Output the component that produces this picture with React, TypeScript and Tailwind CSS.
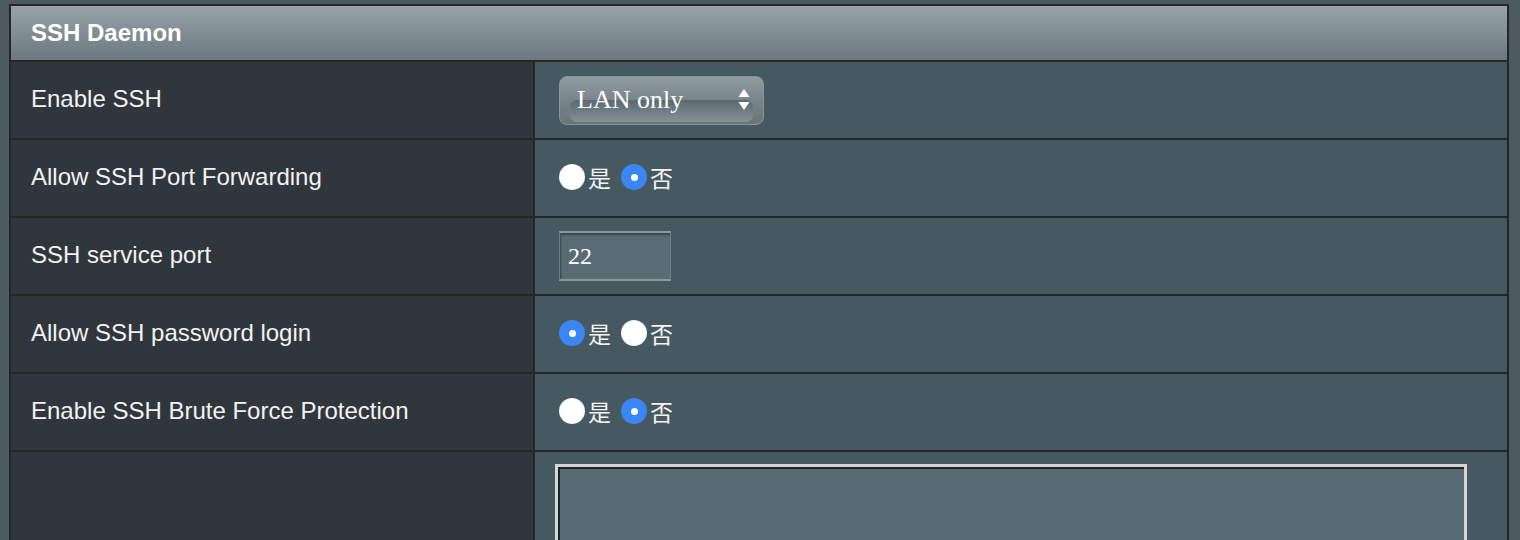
import React from 'react';

const Radio = ({ checked }: { checked: boolean }) =>
  checked ? (
    <span className="flex h-[26px] w-[26px] items-center justify-center rounded-full bg-[#3a86f5]">
      <span className="h-[7px] w-[7px] rounded-full bg-white" />
    </span>
  ) : (
    <span className="h-[26px] w-[26px] rounded-full bg-[radial-gradient(circle,#ffffff_62%,#d0d4d6_85%,#8d979b_100%)]" />
  );

const YesNo = ({ yes }: { yes: boolean }) => (
  <div className="-mt-[2px] flex items-center text-[23px] text-[#f4f4f4] [font-family:'Noto_Sans_CJK_SC',sans-serif]">
    <Radio checked={yes} />
    <span className="ml-[3px] mr-[10px] leading-none">是</span>
    <Radio checked={!yes} />
    <span className="ml-[3px] leading-none">否</span>
  </div>
);

const Row = ({ label, children, last }: { label: string; children?: React.ReactNode; last?: boolean }) => (
  <div className={`flex ${last ? 'h-[160px]' : 'h-[78px] border-b-2 border-[#242628]'}`}>
    <div className={`w-[524px] shrink-0 border-r-2 border-[#242628] bg-[#2f373d] pl-[20px] ${last ? '' : 'flex items-center'}`}>
      <span className="-mt-[2px] text-[24px] text-[#f2f2f2]">{label}</span>
    </div>
    <div className={`flex-1 bg-[#475960] ${last ? 'pl-[20px] pt-[12px]' : 'flex items-center pl-[24px]'}`}>{children}</div>
  </div>
);

export default function App() {
  return (
    <div className="h-[540px] overflow-hidden bg-[#4d5b61] pl-[9px] pt-[4px] [font-family:'Liberation_Sans',Arial,sans-serif]">
      <div className="w-[1500px] border-2 border-[#242628]">
        <div className="flex h-[56px] items-center border-b-2 border-[#242628] bg-gradient-to-b from-[#97a3a8] to-[#6b7a80] pl-[20px]">
          <span className="text-[24px] font-bold text-white">SSH Daemon</span>
        </div>

        <Row label="Enable SSH">
          <div className="relative h-[49px] w-[205px] overflow-hidden rounded-[8px] border border-[#8a9498] bg-gradient-to-b from-[#8f9ca0] via-[#77868b] to-[#687579]">
            <div className="absolute bottom-[2px] left-[10px] right-[10px] top-[23px] rounded-[7px] bg-gradient-to-b from-[#5a6a70] to-[#839296]" />
            <div className="relative flex h-full items-center justify-between pl-[17px] pr-[13px]">
              <span className="text-[26px] leading-none text-white [font-family:'Liberation_Serif',serif]">LAN only</span>
              <svg width="12" height="24" viewBox="0 0 12 24">
                <path d="M6 1 L11.5 9 L0.5 9 Z" fill="#fff" />
                <path d="M0.5 14 L11.5 14 L6 22 Z" fill="#fff" />
              </svg>
            </div>
          </div>
        </Row>

        <Row label="Allow SSH Port Forwarding">
          <YesNo yes={false} />
        </Row>

        <Row label="SSH service port">
          <div className="flex h-[50px] w-[112px] items-center border-y-2 border-x border-t-[#8a999b] border-b-[#8a999b] border-x-[#6f8084] bg-[#586c73] pl-[8px] shadow-[inset_1px_2px_2px_rgba(0,0,0,0.35)]">
            <span className="text-[24px] leading-none text-white [font-family:'Liberation_Serif',serif]">22</span>
          </div>
        </Row>

        <Row label="Allow SSH password login">
          <YesNo yes={true} />
        </Row>

        <Row label="Enable SSH Brute Force Protection">
          <YesNo yes={false} />
        </Row>

        <Row label="" last>
          <div className="h-[140px] w-[912px] border-[3px] border-[#d6d6d6] bg-[#576b72] shadow-[inset_2px_2px_0_#222]" />
        </Row>
      </div>
    </div>
  );
}
